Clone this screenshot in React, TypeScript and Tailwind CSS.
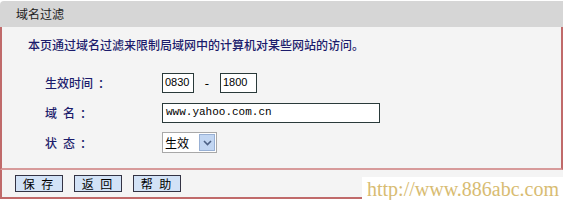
import React from 'react';

const cjk = '"Noto Sans CJK SC", "DejaVu Sans", sans-serif';

const Label = ({ chars, spaced }: { chars: string[]; spaced?: boolean }) => (
  <span className="w-[117px] flex items-center">
    {chars.map((c, i) => (
      <span key={i} className={spaced && i > 0 ? 'ml-[6px]' : ''}>
        {c}
      </span>
    ))}
    <span className="ml-[5px]">：</span>
  </span>
);

export default function App() {
  return (
    <div className="w-[564px] h-[200px] bg-white relative overflow-hidden" style={{ fontFamily: cjk }}>
      <div className="w-[563px] flex flex-col">
        {/* Title bar */}
        <div className="h-[26px] mt-[1px] bg-[#d6d6d6] rounded-tl-[4px] flex items-center pl-[16px] text-[12px] text-[#222]">
          域名过滤
        </div>

        {/* Body */}
        <div className="h-[143px] bg-[#f4f4f4] border-l-2 border-r-2 border-[#c06a6a] border-b-2 border-b-[#d79a9a] flex flex-col">
          <div className="pl-[26px] pt-[10px] text-[12px] leading-[16px] font-medium text-[#1c1c6c]">
            本页通过域名过滤来限制局域网中的计算机对某些网站的访问。
          </div>

          <div className="flex flex-col pl-[43px] pt-[19px] gap-[9px] text-[12px] font-medium text-[#1c1c6c]">
            <div className="flex items-center h-[21px]">
              <Label chars={['生', '效', '时', '间']} />
              <div className="w-[32px] h-[20px] border border-[#2a3a3a] bg-white text-[11px] font-normal text-black flex items-center pl-[2px] leading-none" style={{ fontFamily: '"Liberation Sans", sans-serif' }}>0830</div>
              <span className="w-[26px] text-center text-black">-</span>
              <div className="w-[37px] h-[20px] border border-[#2a3a3a] bg-white text-[11px] font-normal text-black flex items-center pl-[2px] leading-none" style={{ fontFamily: '"Liberation Sans", sans-serif' }}>1800</div>
            </div>
            <div className="flex items-center h-[21px]">
              <Label chars={['域', '名']} spaced />
              <div className="w-[218px] h-[20px] border border-[#2a3a3a] bg-white text-[11px] font-normal text-black flex items-center pl-[3px] leading-none" style={{ fontFamily: '"Liberation Mono", monospace' }}>www.yahoo.com.cn</div>
            </div>
            <div className="flex items-center h-[21px]">
              <Label chars={['状', '态']} spaced />
              <div className="w-[55px] h-[21px] border border-[#a8a8a8] bg-white flex items-center text-black font-normal text-[12px]">
                <span className="flex-1 pl-[2px]">生效</span>
                <span className="w-[16px] h-[17px] mr-[1px] bg-[#c2d6f2] border border-[#98b0d4] flex items-center justify-center">
                  <svg width="9" height="6" viewBox="0 0 9 6">
                    <path d="M1 1 L4.5 4.5 L8 1" fill="none" stroke="#4d6185" strokeWidth="1.6" />
                  </svg>
                </span>
              </div>
            </div>
          </div>
        </div>

        {/* Button bar */}
        <div className="h-[29px] bg-[#f4f4f4] border-l-2 border-r-0 border-b-2 border-[#c06a6a] flex items-center pl-[13px] gap-[11px]">
          {['保 存', '返 回', '帮 助'].map((t) => (
            <button
              key={t}
              className="w-[48px] h-[17px] bg-[#d2e2f6] border border-[#334] text-[12px] leading-none text-black flex items-center justify-center tracking-[2px]"
            >
              {t}
            </button>
          ))}
        </div>
      </div>

      {/* Watermark */}
      <div
        className="absolute left-[362px] top-[177px] w-[202px] h-[23px] bg-white flex items-center pl-[5px] text-[20px] text-[#d8bc72]"
        style={{ fontFamily: '"Liberation Serif", serif' }}
      >
        http://www.886abc.com
      </div>
    </div>
  );
}
